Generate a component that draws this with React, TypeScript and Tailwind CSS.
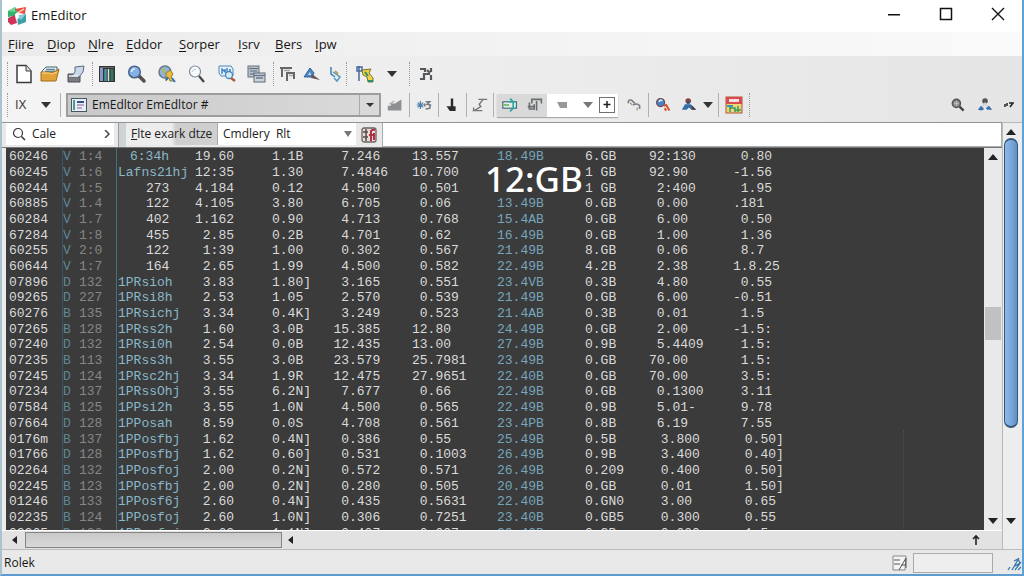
import React from "react";

type Row = string[];

const upperRows: Row[] = [
  ["60246", "V", "1:4", "6:34h", "19.60", "1.1B", "7.246 ", "13.557", "18.49B", "6.GB", "92:130", " 0.80"],
  ["60245", "V", "1:6", "Lafns21hj", "12:35", "1.30", "7.4846", "10.700", "", "1 GB", "92.90", "-1.56"],
  ["60244", "V", "1:5", "273", "4.184", "0.12", "4.500 ", " 0.501", "", "1 GB", " 2:400", " 1.95"],
  ["60885", "V", "1.4", "122", "4.105", "3.80", "6.705 ", " 0.06", "13.49B", "0.GB", " 0.00", ".181"],
  ["60284", "V", "1.7", "402", "1.162", "0.90", "4.713 ", " 0.768", "15.4AB", "0.GB", " 6.00", " 0.50"],
  ["67284", "V", "1:8", "455", "2.85", "0.2B", "4.701 ", " 0.62", "16.49B", "0.GB", " 1.00", " 1.36"],
  ["60255", "V", "2:0", "122", "1:39", "1.00", "0.302 ", " 0.567", "21.49B", "8.GB", " 0.06", " 8.7"],
  ["60644", "V", "1:7", "164", "2.65", "1.99", "4.500 ", " 0.582", "22.49B", "4.2B", " 2.38", "1.8.25"],
  ["07896", "D", "132", "1PRsioh", "3.83", "1.80]", "3.165 ", " 0.551", "23.4VB", "0.3B", " 4.80", " 0.55"],
  ["09265", "D", "227", "1PRsi8h", "2.53", "1.05", "2.570 ", " 0.539", "21.49B", "0.GB", " 6.00", "-0.51"],
  ["60276", "B", "135", "1PRsichj", "3.34", "0.4K]", "3.249 ", " 0.523", "21.4AB", "0.3B", " 0.01", " 1.5"],
  ["07265", "B", "128", "1PRss2h", "1.60", "3.0B", "15.385 ", "12.80", "24.49B", "0.GB", " 2.00", "-1.5:"],
  ["07240", "D", "132", "1PRsi0h", "2.54", "0.0B", "12.435 ", "13.00", "27.49B", "0.9B", " 5.4409", " 1.5:"],
  ["07235", "B", "113", "1PRss3h", "3.55", "3.0B", "23.579 ", "25.7981", "23.49B", "0.GB", "70.00", " 1.5:"],
  ["07245", "D", "124", "1PRsc2hj", "3.34", "1.9R", "12.475 ", "27.9651", "22.40B", "0.GB", "70.00", " 3.5:"],
  ["07234", "D", "137", "1PRssOhj", "3.55", "6.2N]", "7.677 ", " 0.66", "22.49B", "0.GB", " 0.1300", " 3.11"],
  ["07584", "B", "125", "1PPsi2h", "3.55", "1.0N", "4.500 ", " 0.565", "22.49B", "0.9B", " 5.01-", " 9.78"],
  ["07664", "D", "128", "1PPosah", "8.59", "0.0S", "4.708 ", " 0.561", "23.4PB", "0.8B", " 6.19", " 7.55"],
];

const lowerRows: Row[] = [
  ["0176m", "B", "137", "1PPosfbj", "1.62", "0.4N]", "0.386 ", " 0.55", "25.49B", "0.5B", " 3.800", " 0.50]"],
  ["01766", "D", "128", "1PPosfbj", "1.62", "0.60]", "0.531 ", " 0.1003", "26.49B", "0.9B", " 3.400", " 0.40]"],
  ["02264", "B", "132", "1PPosfoj", "2.00", "0.2N]", "0.572 ", " 0.571", "26.49B", "0.209", " 0.400", " 0.50]"],
  ["02245", "B", "123", "1PPosfbj", "2.00", "0.2N]", "0.280 ", " 0.505", "20.49B", "0.GB", " 0.01", " 1.50]"],
  ["01246", "B", "133", "1PPosf6j", "2.60", "0.4N]", "0.435 ", " 0.5631", "22.40B", "0.GN0", " 3.00", " 0.65"],
  ["02235", "B", "124", "1PPosfoj", "2.60", "1.0N]", "0.306 ", " 0.7251", "23.40B", "0.GB5", " 0.300", " 0.55"],
  ["02265", "D", "126", "1PPosfoj", "2.62", "1.1N]", "0.407 ", " 0.007", "20.40B", "0.GB", " 0.000", " 1.5"],
];

const columnWidths = [57, 16, 39, 72, 44, 78, 76, 109, 88, 64, 84, 84];
const blue = "text-[#8ab8ca]";
const white = "text-[#dadada]";

function DataRow({ row, shifted }: { row: Row; shifted?: boolean }) {
  const named = row[3].length > 3;
  const short = row[3] === "6:34h";
  const inset = shifted ? "pl-1" : "";
  const styles = [
    white + " pl-[3px]",
    "text-[#5d8795]",
    "text-[#868686]",
    named ? (short ? blue + " pl-3" : blue) : white + " pl-7",
    white + " text-right",
    white + " pl-[38px]",
    white + " text-right",
    white + " pl-6",
    "text-[#76a5bb]",
    white,
    white + " " + inset,
    white + " " + inset,
  ];
  return (
    <tr>
      {row.map((cell, i) => (
        <td key={i} className={"overflow-visible py-0 whitespace-pre " + styles[i]}>
          {cell}
        </td>
      ))}
    </tr>
  );
}

function Ico({ children, label, small }: { children: React.ReactNode; label: string; small?: boolean }) {
  return (
    <button aria-label={label} className="shrink-0">
      <svg viewBox="0 0 20 20" className={small ? "size-4" : "size-5"} fill="none">
        {children}
      </svg>
    </button>
  );
}

function Down({ label }: { label: string }) {
  return (
    <button aria-label={label} className="shrink-0">
      <svg viewBox="0 0 10 6" className="h-[6px] w-[10px]">
        <path d="M0 0H10L5 6Z" fill="#333" />
      </svg>
    </button>
  );
}

const Sep = () => <span className="h-6 w-px shrink-0 bg-[#b0b0b0]" />;
const Grip = () => <span className="h-6 w-px shrink-0 border-l border-dotted border-[#9a9a9a]" />;

function Arrow({ dir, label }: { dir: "up" | "down" | "left"; label: string }) {
  const d = { up: "M0 7L5 1L10 7Z", down: "M0 1H10L5 7Z", left: "M7 0V8L2 4Z" }[dir];
  return (
    <button aria-label={label} className="flex size-[18px] shrink-0 items-center justify-center">
      <svg viewBox="0 0 10 8" className="h-2 w-[10px]">
        <path d={d} fill="#222" />
      </svg>
    </button>
  );
}

const Window = () => (
  <>
    <rect x="1" y="2" width="11" height="11" fill="#b9c0ca" stroke="#66707c" />
    <path d="M2 4.500H11M3 7H10M3 10H10" stroke="#5b6b80" />
    <rect x="7" y="9" width="11" height="9" fill="#ccd4dc" stroke="#5f6874" />
    <path d="M7 11.500H18M9 14H16" stroke="#66788f" strokeWidth="1.500" />
  </>
);

function MainToolbar() {
  return (
    <div className="flex h-[34px] shrink-0 items-center bg-gradient-to-r from-[#f4f4f4] to-[#e5e5e5] pt-0.5 pl-[5px]">
      <Grip />
      <div className="ml-[6px] flex gap-[6px]">
        <Ico label="New">
          <path d="M3 1.500H12L17 7V18.500H3Z" fill="#fff" stroke="#3c3c3c" strokeWidth="1.500" />
          <path d="M12 1.500V7H17" fill="#ddd" stroke="#3c3c3c" />
        </Ico>
        <Ico label="Open">
          <path d="M2 7L6 3H17V11H2Z" fill="#e7f1f4" stroke="#47606c" />
          <path d="M6 5.500H15M5 7.500H15" stroke="#5c8a9c" strokeWidth="1.500" />
          <path d="M1 8H9L12 9L19 5L16 17H1Z" fill="#e2a23a" stroke="#a06c1c" />
          <path d="M2 9H9L12 10L17 8" stroke="#ffd98a" />
        </Ico>
        <Ico label="Save">
          <path d="M2 10H14V18H2Z" fill="#7a7d82" stroke="#4c4f55" />
          <path d="M9 3L18 2L17 8L13 13H5L9 8Z" fill="#c9d9ea" stroke="#5b6b7e" />
          <path d="M3 12H12" stroke="#eee" strokeWidth="1.500" />
        </Ico>
      </div>
      <span className="w-1.5" />
      <Grip />
      <div className="ml-1 flex gap-2.5">
        <Ico label="Library">
          <rect x="2" y="2" width="16" height="16" fill="#333" />
          <path d="M4.500 4V17" stroke="#8b96c8" strokeWidth="3" />
          <path d="M8.500 5V17" stroke="#3d9c9c" strokeWidth="2.500" />
          <path d="M11.500 5V17" stroke="#d8e4e0" strokeWidth="1.500" />
          <path d="M15 5V17" stroke="#327664" strokeWidth="3" />
          <path d="M3 3.500H17" stroke="#666a70" />
        </Ico>
        <Ico label="Find">
          <path d="M12 12L17 17" stroke="#55504c" strokeWidth="3.500" strokeLinecap="round" />
          <circle cx="7.500" cy="8" r="5.800" fill="#85b2e6" stroke="#4a6487" strokeWidth="1.500" />
          <path d="M4.500 8Q5 5 8 4.500" stroke="#d8ebff" strokeWidth="1.500" />
        </Ico>
        <Ico label="Web search">
          <circle cx="8" cy="8" r="6" fill="#8eb5e0" stroke="#6b7787" strokeWidth="1.500" />
          <path d="M4 5L8 4L9 8L6 10Z" fill="#a8b878" />
          <path d="M9 9L13 6L16 10L14 13L18 17H13L12 14L9 17Z" fill="#edbb36" stroke="#8b7a38" />
          <path d="M9 16L11 13M15 14L18 18" stroke="#3377b8" strokeWidth="2" />
        </Ico>
        <Ico label="Zoom">
          <circle cx="8" cy="7.500" r="5.500" fill="#f8fcff" stroke="#7b8a98" strokeWidth="1.200" />
          <path d="M12 12L17 18" stroke="#444" strokeWidth="2.200" />
          <path d="M5 8Q6 5 9 5" stroke="#b2c6d6" />
        </Ico>
        <Ico label="Find in files">
          <path d="M2 2H14L16 5V12H4L2 9Z" fill="#e8f3fc" stroke="#4a86bc" />
          <path d="M5 10V5L8 8V5M10 4V10M12 6H14" stroke="#3578b6" strokeWidth="1.300" />
          <circle cx="12" cy="11" r="3.500" fill="#d7eaf8" stroke="#498ab9" strokeWidth="1.300" />
          <path d="M14 14L18 17" stroke="#a85b3a" strokeWidth="2.500" />
        </Ico>
        <Ico label="Cascade">
          <Window />
        </Ico>
      </div>
      <span className="w-1.5" />
      <Grip />
      <div className="ml-1 flex gap-1">
        <Ico label="Wrap">
          <path d="M2 4H14M4 4V13M8 9H17M9 9V17M16 9V15" stroke="#64686b" strokeWidth="2" />
          <path d="M6 6.500H12M11 11.500H15" stroke="#9fa4a8" strokeWidth="1.500" />
        </Ico>
        <Ico label="Font">
          <path d="M2 13L8 4L12 9L10 13Z" fill="#4a86c2" stroke="#30659e" />
          <path d="M10 10L18 16L9 14Z" fill="#665a58" />
          <path d="M6 11L8 8L9 11Z" fill="#cde4f5" />
        </Ico>
        <Ico label="Edit">
          <path d="M5 3V10L9 13" stroke="#3f80b8" strokeWidth="1.500" />
          <path d="M7 8L14 13L11 17L8 14" stroke="#4a9bc1" strokeWidth="1.500" />
          <path d="M9 7L12 10" stroke="#b99b5c" strokeWidth="2" />
        </Ico>
      </div>
      <Grip />
      <div className="ml-2 flex items-center gap-3">
        <Ico label="Tools">
          <path d="M4 17V2M2 3H7V7H2Z" stroke="#4869a2" strokeWidth="1.500" />
          <path d="M7 6L16 5L14 9L18 14V18H13L12 13L8 11Z" fill="#f0d242" stroke="#75762f" />
          <path d="M13 17H18M10 8L13 12" stroke="#2a8f70" strokeWidth="2" />
        </Ico>
        <Down label="More tools" />
      </div>
      <span className="w-3" />
      <Grip />
      <span className="w-1.5" />
      <Ico label="Split">
        <path d="M4 5H9V8M4 15H8V10H14M15 4V8M15 11V16M11 6L14 9" stroke="#55585b" strokeWidth="2.200" />
      </Ico>
    </div>
  );
}

function PluginToolbar() {
  return (
    <div className="flex h-8 shrink-0 items-center bg-gradient-to-r from-[#f4f4f4] to-[#e5e5e5] pr-2 pb-0.5 pl-[5px] text-xs">
      <Grip />
      <button className="ml-[7px] w-[26px] text-left text-[13px] text-[#333]">IX</button>
      <Down label="Macro list" />
      <span className="mr-[5px] ml-[9px] flex">
        <Sep />
      </span>
      <button className="flex h-6 w-[315px] shrink-0 items-center border-2 border-[#9d9d9d] bg-gradient-to-r from-[#c9c9c9] to-[#dadada] pl-[3px] text-left text-[#181818]">
        <svg viewBox="0 0 16 14" className="mr-[5px] h-[14px] w-4">
          <rect x=".5" y=".5" width="15" height="13" fill="#e8eef0" stroke="#465664" />
          <path d="M3 2V12" stroke="#4a9b96" strokeWidth="2" />
          <path d="M6 4H13" stroke="#3c4b9a" strokeWidth="2" />
          <path d="M6 7H13M6 10H11" stroke="#925ba2" />
        </svg>
        <span className="font-medium">EmEdltor EmEdltor #</span>
        <span className="ml-auto flex h-full w-5 items-center justify-center border-l border-[#aaa]">
          <svg viewBox="0 0 8 4" className="h-1 w-2">
            <path d="M0 0H8L4 4Z" fill="#333" />
          </svg>
        </span>
      </button>
      <span className="w-[6px]" />
      <Ico small label="Histogram">
        <path d="M1 17V11H5V8H10L18 3V17Z" fill="#8d8f91" />
        <path d="M3 9L9 5" stroke="#aaa" strokeWidth="1.500" />
      </Ico>
      <span className="w-[6px]" />
      <Sep />
      <span className="w-[6px]" />
      <Ico small label="Convert">
        <path d="M2 7L9 13M2 13L9 7M5.500 5V15M1 10H10" stroke="#4e81ab" strokeWidth="1.500" />
        <path d="M12 6H17L14 9L18 10L17 14L12 15M11 8V12" stroke="#777b80" strokeWidth="2" />
      </Ico>
      <span className="w-[6px]" />
      <Sep />
      <span className="w-[5px]" />
      <Ico small label="Pin">
        <path d="M10 2V15M6 13H13V16H8Z" stroke="#2a2a2a" strokeWidth="3" fill="#222" />
      </Ico>
      <span className="w-[6px]" />
      <Sep />
      <span className="w-[5px]" />
      <Ico small label="Sum">
        <path d="M8 3H19M14 3L9 9L11 12L3 17H13M2 13V17" stroke="#74777a" strokeWidth="1.800" />
      </Ico>
      <span className="w-[5px]" />
      <Sep />
      <div className="ml-[3px] flex h-[23px] shrink-0 items-center bg-white shadow-[0_1px_1px_#aaa]">
        <div className="flex h-full w-[50px] items-center justify-around bg-[#d9d9d9]">
          <Ico small label="Insert column">
            <rect x="1" y="6" width="17" height="8" fill="#e5eeea" stroke="#456f80" strokeWidth="1.500" />
            <path d="M10 2L15 7M9 6H14V14L10 18" stroke="#23a5a0" strokeWidth="2" />
            <path d="M2 10H9" stroke="#74ae5a" strokeWidth="2" />
          </Ico>
          <Ico small label="Rotate">
            <path d="M3 7V15H9V9M6 8V3H18V8M12 5V17M1 12H8" stroke="#696d70" strokeWidth="2" />
          </Ico>
        </div>
        <button aria-label="Filter" className="ml-[10px]">
          <svg viewBox="0 0 10 6" className="h-[6px] w-[10px]">
            <path d="M0 0H10V6H3Z" fill="#999" />
          </svg>
        </button>
        <button aria-label="Filter options" className="ml-4">
          <svg viewBox="0 0 10 6" className="h-[6px] w-[10px]">
            <path d="M0 0H10L5 6Z" fill="#777" />
          </svg>
        </button>
        <button aria-label="Add" className="mr-[3px] ml-[6px]">
          <svg viewBox="0 0 16 18" className="h-[18px] w-4" fill="none">
            <rect x=".5" y="1.500" width="15" height="15" stroke="#707070" />
            <path d="M8 5V12M4.500 8.500H11.500" stroke="#222" strokeWidth="1.500" />
          </svg>
        </button>
      </div>
      <span className="w-2" />
      <Ico small label="Link">
        <path d="M3 8Q2 3 7 4L11 8M9 10Q14 7 17 11V15" stroke="#777d85" strokeWidth="2" />
        <path d="M5 7L8 10M14 13V17" stroke="#a79372" strokeWidth="1.500" />
      </Ico>
      <span className="w-1.5" />
      <Sep />
      <span className="w-[6px]" />
      <Ico small label="Globe tools">
        <circle cx="7" cy="7" r="5" fill="#4385ca" stroke="#78424a" strokeWidth="1.500" />
        <path d="M5 6Q7 2 9 5" stroke="#d4efff" strokeWidth="2" />
        <path d="M11 11L14 10L18 17M12 14L14 17" stroke="#d35332" strokeWidth="2.500" />
      </Ico>
      <span className="w-2.5" />
      <Ico small label="Users">
        <circle cx="9" cy="5" r="3.500" fill="#963f32" />
        <path d="M9 4V9" stroke="#2a5b8b" strokeWidth="3" />
        <path d="M1 16L5 9H12L19 16H13L10 13L7 16Z" fill="#326fa7" />
        <path d="M13 10L19 16H14Z" fill="#563b38" />
      </Ico>
      <span className="w-[6px]" />
      <Down label="Users list" />
      <span className="w-[5px]" />
      <Sep />
      <span className="w-[5px]" />
      <Ico label="Calendar">
        <rect x="2" y="2" width="16" height="16" fill="#efd675" stroke="#a7573d" />
        <path d="M2 2H18V9H2Z" fill="#d94c4c" />
        <path d="M5 5.500H15" stroke="#f8dde5" strokeWidth="3" />
        <path d="M6 10V17M6 13H11V17M14 11V17M11 15H17" stroke="#3a9a65" strokeWidth="1.500" />
        <path d="M3 11H9" stroke="#3f91b8" strokeWidth="2" />
      </Ico>
      <span className="w-[5px]" />
      <Grip />
      <div className="ml-auto flex items-center gap-[11px]">
        <Ico small label="Find next">
          <circle cx="8" cy="8" r="5" fill="#909497" stroke="#555" strokeWidth="2" />
          <path d="M5 8H11M8 5V11" stroke="#ccc" />
          <path d="M12 12L17 17" stroke="#444" strokeWidth="3" />
        </Ico>
        <Ico small label="Group">
          <circle cx="10" cy="5" r="3.500" fill="#555" />
          <path d="M7 12L10 8L13 12" stroke="#cbd5dc" strokeWidth="2" />
          <path d="M1 16L5 11L9 15L6 17ZM11 14L15 11L19 16H13Z" fill="#386fae" />
        </Ico>
        <button aria-label="Overflow">
          <svg viewBox="0 0 10 6" className="h-[6px] w-[10px]" fill="none">
            <path d="M1 2V5M3 1V4M5 1H9L6 5" stroke="#222" strokeWidth="1.500" />
          </svg>
        </button>
      </div>
    </div>
  );
}

function TabStrip() {
  return (
    <div className="flex h-[25px] shrink-0 border-t border-[#8f969a] bg-[#e9e9e9] text-xs text-[#222]">
      <label className="ml-1 flex h-[22px] w-[108px] shrink-0 items-center bg-white pl-[6px]">
        <svg viewBox="0 0 14 14" className="mr-1.5 size-[14px]" fill="none">
          <circle cx="6" cy="6" r="4.500" stroke="#333" strokeWidth="1.200" />
          <path d="M9.500 9.500L13 13" stroke="#333" strokeWidth="1.500" />
        </svg>
        <input aria-label="Search" defaultValue="Cale" className="w-[72px] min-w-0 bg-transparent outline-none" />
        <svg viewBox="0 0 6 8" className="h-2 w-1.5" fill="none">
          <path d="M1 0L5 4L1 8" stroke="#444" strokeWidth="1.500" />
        </svg>
      </label>
      <span className="ml-1 w-2 shrink-0 border-l border-[#9b9b9b] bg-[#ced3d6]" />
      <button className="h-[22px] w-[92px] shrink-0 border-r border-[#aaa] bg-gradient-to-r from-[#ededed] from-50% to-[#cfcfcf] to-55% pl-[5px] text-left font-medium whitespace-nowrap">
        <span className="underline">F</span>lte exark dtze
      </button>
      <button className="flex h-[22px] w-[138px] shrink-0 items-center bg-white pr-1 pl-[5px] text-left font-medium whitespace-pre">
        Cmdlery  Rlt
        <svg viewBox="0 0 8 6" className="ml-auto h-1.5 w-2">
          <path d="M0 0H8L4 6Z" fill="#777" />
        </svg>
      </button>
      <button aria-label="CSV" className="mx-[5px] shrink-0">
        <svg viewBox="0 0 16 16" className="size-4" fill="none">
          <rect x="1" y="1" width="14" height="14" rx="2" fill="#e8dcda" stroke="#6a6462" strokeWidth="1.300" />
          <path d="M2 5H7M2 10H7M5 2V14" stroke="#554b4b" strokeWidth="1.500" />
          <path d="M10 14V4Q11 2 14 3M8 8H14M13 6V13" stroke="#b23240" strokeWidth="2" />
        </svg>
      </button>
      <div className="h-6 flex-1 border-x border-b border-[#a5adb1] bg-white" />
    </div>
  );
}

function Grid() {
  return (
    <div className="relative ml-[6px] min-w-0 flex-1 overflow-hidden bg-[#3b3b3b] pt-px">
      <div className="absolute inset-y-0 left-[56px] w-px bg-[#3d5560]" />
      <div className="absolute inset-y-0 left-[110px] w-px bg-[#4b6e7c]" />
      <div className="absolute bottom-0 left-[897px] h-[100px] border-l border-dotted border-[#4c4c4c]" />
      <table className="h-[392px] table-fixed border-collapse font-['Liberation_Mono',monospace] text-[13px] leading-[15px]">
        <colgroup>
          {columnWidths.map((w, i) => (
            <col key={i} style={{ width: w }} />
          ))}
        </colgroup>
        <tbody>
          {upperRows.map((r, i) => (
            <DataRow key={i} row={r} />
          ))}
        </tbody>
        <tbody>
          {lowerRows.map((r, i) => (
            <DataRow key={i} row={r} shifted />
          ))}
        </tbody>
      </table>
      <div className="absolute top-[17px] left-[479px] font-['Noto_Sans',sans-serif] text-[35px] leading-7 font-medium text-white">
        12:GB
      </div>
    </div>
  );
}

const menus = [
  ["Fiire", "w-[39px]"],
  ["Diop", "w-[41px]"],
  ["Nlre", "w-[38px]"],
  ["Eddor", "w-[53px]"],
  ["Sorper", "w-[59px]"],
  ["Isrv", "w-[37px]"],
  ["Bers", "w-[40px]"],
  ["Ipw", "w-[40px]"],
];

export default function App() {
  return (
    <div className="flex h-screen flex-col overflow-hidden border-r-2 border-b-2 border-l-2 border-r-[#5fa3d6] border-b-[#5d9bd0] border-l-[#a9c3cf] bg-[#ececec] font-['Open_Sans','Noto_Sans',sans-serif] text-[#161616]">
      <header className="flex h-8 shrink-0 items-center bg-white pr-[17px] pl-[5px]">
        <svg viewBox="0 0 20 20" className="mr-1 size-5" fill="none">
          <path d="M1 5L8 1L11 5L8 10L1 11Z" fill="#31b46b" />
          <path d="M1 5L8 1L8 6Z" fill="#78d597" />
          <path d="M8 3L19 1L18 8L12 7Z" fill="#ed4b3f" />
          <path d="M9 8L17 3" stroke="#f9c5b4" strokeWidth="1.500" />
          <path d="M1 12L8 9L10 17L4 19L1 16Z" fill="#ce335a" />
          <path d="M10 10L19 8V16L11 19Z" fill="#3f9fa8" />
          <path d="M10 10L14 14L19 8Z" fill="#84cfd3" />
          <path d="M8 8L11 7L12 12L9 14Z" fill="#fff" />
        </svg>
        <h1 className="text-[13px] font-medium">EmEditor</h1>
        <div className="-mt-1 ml-auto flex items-center gap-[38px]">
          <button aria-label="Minimize">
            <svg viewBox="0 0 14 14" className="size-[14px]">
              <path d="M1 7H13V8.500H1Z" fill="#111" />
            </svg>
          </button>
          <button aria-label="Maximize">
            <svg viewBox="0 0 14 14" className="size-[14px]" fill="none">
              <rect x="1.500" y="1.500" width="11" height="11" stroke="#111" strokeWidth="1.500" />
            </svg>
          </button>
          <button aria-label="Close">
            <svg viewBox="0 0 14 14" className="size-[14px]" fill="none">
              <path d="M1 1L13 13M13 1L1 13" stroke="#111" strokeWidth="1.400" />
            </svg>
          </button>
        </div>
      </header>
      <nav className="flex h-6 shrink-0 items-center bg-gradient-to-r from-[#ebebeb] to-[#fafafa] pt-0.5 pl-[6px] text-[13px] font-medium">
        {menus.map(([name, width]) => (
          <button key={name} className={"text-left " + width}>
            <span className="underline underline-offset-2">{name[0]}</span>
            {name.slice(1)}
          </button>
        ))}
      </nav>
      <MainToolbar />
      <PluginToolbar />
      <main className="flex min-h-0 flex-1">
        <div className="flex min-w-0 flex-1 flex-col">
          <TabStrip />
          <div className="-ml-[2px] flex min-h-0 flex-1 border-t border-[#777]">
            <Grid />
            <div className="flex w-[18px] shrink-0 flex-col bg-[#e9e9e9]">
              <Arrow dir="up" label="Scroll up" />
              <div className="flex-[142]" />
              <div className="mx-px h-[33px] bg-[#c1c1c1]" />
              <div className="flex-[173]" />
              <Arrow dir="down" label="Scroll down" />
            </div>
          </div>
          <div className="flex h-[19px] shrink-0 items-center border-t border-white bg-[#e2e2e2] pl-1">
            <Arrow dir="left" label="Scroll left" />
            <div className="ml-px h-4 w-[257px] border border-[#858585] bg-gradient-to-b from-[#c9c9c9] to-[#d8d8d8]" />
            <Arrow dir="left" label="Scroll previous" />
            <button aria-label="Go to top" className="mr-[22px] ml-auto">
              <svg viewBox="0 0 8 12" className="h-3 w-2" fill="none">
                <path d="M4 11V2M1 5L4 2L7 5" stroke="#222" strokeWidth="1.600" />
              </svg>
            </button>
          </div>
        </div>
        <div className="flex w-[20px] shrink-0 flex-col items-center border-t border-l border-[#b9b9b9] bg-[#ededed] pr-[3px] pb-[19px]">
          <Arrow dir="up" label="Page up" />
          <div className="-mt-[3px] w-[14px] flex-[287] rounded-[7px] border-x border-y-2 border-[#34567c] bg-gradient-to-r from-[#8fb8e5] via-[#79a9dc] to-[#608fc4]" />
          <div className="flex-[84]" />
          <Arrow dir="down" label="Page down" />
        </div>
      </main>
      <footer className="flex h-[25px] shrink-0 items-center border-t border-[#bcbcbc] bg-[#e9e9e9] pt-0.5 pl-0.5 text-xs font-medium">
        <span>Rolek</span>
        <svg viewBox="0 0 16 16" className="mr-[5px] ml-auto size-4" fill="none">
          <path d="M1 1H14L13 15H1Z" fill="#f4f4f4" stroke="#888" />
          <path d="M2 5H8M2 9H8M7 15L14 3V13M9 10H14" stroke="#555" />
        </svg>
        <div className="h-5 w-20 border border-[#aaa] bg-[#eee]" />
        <svg viewBox="0 0 16 16" className="ml-[13px] size-4" fill="none">
          <path d="M2 15L4 12M6 15L13 3M9 15L15 7M12 15L15 12M8 6L12 4L14 8L9 11" stroke="#3c79ad" strokeWidth="1.300" />
        </svg>
      </footer>
    </div>
  );
}
